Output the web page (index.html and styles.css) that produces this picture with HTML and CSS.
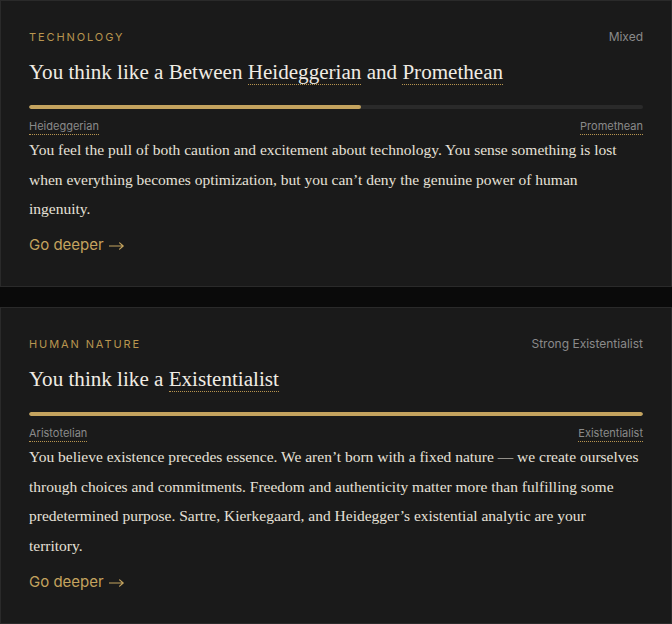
FILE: index.html
```html
<!DOCTYPE html>
<html lang="en">
<head>
<meta charset="utf-8">
<link rel="stylesheet" href="styles.css">
</head>
<body>
<div class="stack">
  <section class="card">
    <div class="head">
      <span class="cat">Technology</span>
      <span class="strength">Mixed</span>
    </div>
    <h2 class="title">You think like a Between <span class="term">Heideggerian</span> and <span class="term">Promethean</span></h2>
    <div class="track"><div class="fill" style="width:54%"></div></div>
    <div class="ends"><span class="end">Heideggerian</span><span class="end">Promethean</span></div>
    <p class="desc">You feel the pull of both caution and excitement about technology. You sense something is lost<br>when everything becomes optimization, but you can’t deny the genuine power of human<br>ingenuity.</p>
    <a class="more" href="#">Go deeper<svg class="arrow" width="15" height="10" viewBox="0 0 15 10" aria-hidden="true"><path d="M0.5 5H14.2M10.6 1.9L14.2 5L10.6 8.1" fill="none" stroke="currentColor" stroke-width="1.2" stroke-linecap="round" stroke-linejoin="round"/></svg></a>
  </section>
  <section class="card">
    <div class="head">
      <span class="cat">Human Nature</span>
      <span class="strength">Strong Existentialist</span>
    </div>
    <h2 class="title">You think like a <span class="term">Existentialist</span></h2>
    <div class="track"><div class="fill" style="width:100%"></div></div>
    <div class="ends"><span class="end">Aristotelian</span><span class="end">Existentialist</span></div>
    <p class="desc">You believe existence precedes essence. We aren’t born with a fixed nature — we create ourselves<br>through choices and commitments. Freedom and authenticity matter more than fulfilling some<br>predetermined purpose. Sartre, Kierkegaard, and Heidegger’s existential analytic are your<br>territory.</p>
    <a class="more" href="#">Go deeper<svg class="arrow" width="15" height="10" viewBox="0 0 15 10" aria-hidden="true"><path d="M0.5 5H14.2M10.6 1.9L14.2 5L10.6 8.1" fill="none" stroke="currentColor" stroke-width="1.2" stroke-linecap="round" stroke-linejoin="round"/></svg></a>
  </section>
</div>
</body>
</html>
```
FILE: styles.css
```css
html, body {
  margin: 0;
  padding: 0;
  background: #0a0a0a;
}
.stack {
  display: flex;
  flex-direction: column;
  gap: 20px;
}
.card {
  background: #1a1a1a;
  border: 1px solid #2a2a2a;
  padding: 28px 28px 30px;
  display: flex;
  flex-direction: column;
  align-items: stretch;
}
.head {
  display: flex;
  justify-content: space-between;
  align-items: baseline;
  line-height: 16px;
}
.cat {
  font-family: Inter, "Liberation Sans", sans-serif;
  font-size: 11px;
  letter-spacing: 1.9px;
  text-transform: uppercase;
  color: #b8954f;
}
.strength {
  font-family: Inter, "Liberation Sans", sans-serif;
  font-size: 12px;
  color: #8a8a8a;
}
.title {
  margin: 11px 0 0;
  font-family: "Liberation Serif", serif;
  font-weight: normal;
  font-size: 21.1px;
  line-height: 32px;
  color: #f0ece4;
}
.term {
  border-bottom: 1px dotted #b8954f;
}
.track {
  margin-top: 17px;
  height: 4px;
  border-radius: 2px;
  background: #2a2a2a;
  overflow: hidden;
}
.fill {
  height: 100%;
  background: #c4a35e;
  border-radius: 2px;
}
.ends {
  margin-top: 9px;
  display: flex;
  justify-content: space-between;
  line-height: 16px;
}
.end {
  font-family: Inter, "Liberation Sans", sans-serif;
  font-size: 11px;
  color: #8a8a8a;
  border-bottom: 1px dotted #b8954f;
}
.desc {
  margin: 0;
  font-family: "Liberation Serif", serif;
  font-size: 15.5px;
  line-height: 29.5px;
  color: #e6e1d8;
  white-space: nowrap;
}
.more {
  margin-top: 10.5px;
  align-self: flex-start;
  display: inline-flex;
  align-items: center;
  gap: 5px;
  font-family: Inter, "Liberation Sans", sans-serif;
  font-size: 15px;
  line-height: 22px;
  color: #c4a35e;
  text-decoration: none;
}
.arrow {
  display: block;
  margin-top: 2px;
}
```
